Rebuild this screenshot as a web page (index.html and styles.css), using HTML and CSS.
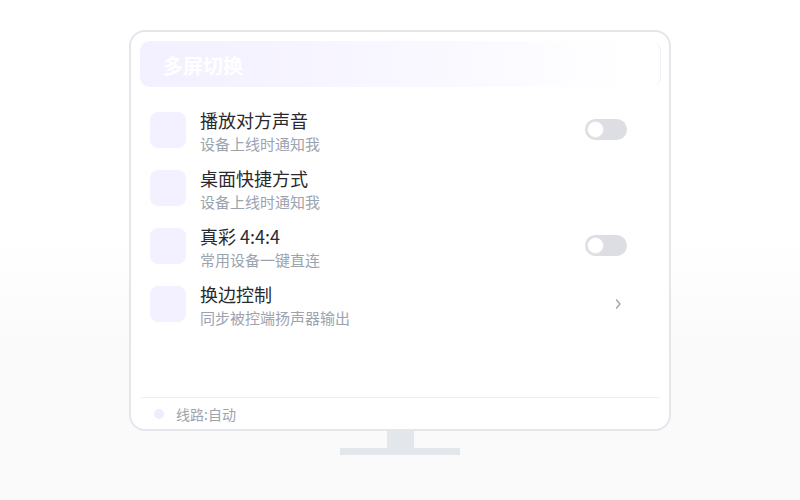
FILE: index.html
```html
<!DOCTYPE html>
<html lang="zh-CN">
<head>
  <meta charset="UTF-8" />
  <meta name="viewport" content="width=device-width, initial-scale=1.0"/>
  <title>多屏切换</title>
  <link rel="stylesheet" href="styles.css">
</head>
<body>

  <div class="screen-wrap">
    <div class="monitor">
      <div class="monitor-header">多屏切换</div>

      <div class="setting-list">
        <div class="setting-row">
          <div class="setting-icon"></div>
          <div class="setting-text">
            <div class="setting-title">播放对方声音</div>
            <div class="setting-desc">设备上线时通知我</div>
          </div>
          <div class="toggle"><span class="knob"></span></div>
        </div>

        <div class="setting-row">
          <div class="setting-icon"></div>
          <div class="setting-text">
            <div class="setting-title">桌面快捷方式</div>
            <div class="setting-desc">设备上线时通知我</div>
          </div>
        </div>

        <div class="setting-row">
          <div class="setting-icon"></div>
          <div class="setting-text">
            <div class="setting-title">真彩 4:4:4</div>
            <div class="setting-desc">常用设备一键直连</div>
          </div>
          <div class="toggle"><span class="knob"></span></div>
        </div>

        <div class="setting-row">
          <div class="setting-icon"></div>
          <div class="setting-text">
            <div class="setting-title">换边控制</div>
            <div class="setting-desc">同步被控端扬声器输出</div>
          </div>
          <div class="chevron">
            <svg width="8" height="12" viewBox="0 0 8 12"><path d="M2.5 2 L6 6 L2.5 10" fill="none" stroke="#9ca3af" stroke-width="1.3" stroke-linecap="round" stroke-linejoin="round"/></svg>
          </div>
        </div>
      </div>

      <div class="monitor-footer">
        <span class="line-dot"></span>
        <span class="line-text">线路:自动</span>
      </div>
    </div>

    <div class="stand-neck"></div>
    <div class="stand-base"></div>
  </div>

</body>
</html>
```

FILE: styles.css
```css
* {
  margin: 0;
  padding: 0;
  box-sizing: border-box;
}

body {
  font-family: "Noto Sans CJK SC", "Noto Sans", "Liberation Sans", sans-serif;
  background: linear-gradient(180deg, #ffffff 0%, #ffffff 48%, #fafafb 70%, #fafafb 100%);
  width: 800px;
  height: 500px;
  overflow: hidden;
}

.screen-wrap {
  display: flex;
  flex-direction: column;
  align-items: center;
  padding-top: 30px;
}

.monitor {
  width: 542px;
  height: 401px;
  border: 2px solid #e3e6eb;
  border-radius: 16px;
  background: #fff;
  display: flex;
  flex-direction: column;
  padding: 9px 8px 0 9px;
}

.monitor-header {
  height: 46px;
  border-radius: 10px;
  background: linear-gradient(90deg, #f3f0ff 0%, #f8f6ff 45%, #ffffff 95%);
  border-right: 1px solid #eff0f3;
  color: #fff;
  font-size: 20px;
  font-weight: 700;
  line-height: 50px;
  padding-left: 23px;
}

.setting-list {
  flex: 1;
  display: flex;
  flex-direction: column;
  gap: 22px;
  padding: 25px 34px 0 10px;
}

.setting-row {
  display: flex;
  align-items: flex-start;
  height: 36px;
}

.setting-icon {
  width: 36px;
  height: 36px;
  border-radius: 8px;
  background: #f3f0ff;
  flex-shrink: 0;
}

.setting-text {
  flex: 1;
  margin-left: 14px;
  margin-top: -5px;
}

.setting-title {
  font-size: 18px;
  line-height: 26px;
  color: #2a2a2e;
}

.setting-desc {
  font-size: 15px;
  line-height: 22px;
  color: #9ca3af;
}

.toggle {
  width: 42px;
  height: 21px;
  margin-top: 7px;
  border-radius: 11px;
  background: #dcdee3;
  position: relative;
}

.knob {
  position: absolute;
  left: 2px;
  top: 2px;
  width: 17px;
  height: 17px;
  border-radius: 50%;
  background: #fff;
  border: 1px solid #e6e8ec;
}

.chevron {
  width: 42px;
  margin-top: 12px;
  display: flex;
  justify-content: flex-end;
  padding-right: 5px;
}

.monitor-footer {
  height: 32px;
  margin: 0 1px;
  border-top: 1px solid #eef0f3;
  display: flex;
  align-items: center;
  padding-left: 13px;
}

.line-dot {
  width: 10px;
  height: 10px;
  border-radius: 50%;
  background: #efecfd;
  margin-right: 12px;
}

.line-text {
  font-size: 14px;
  color: #9ca3af;
}

.stand-neck {
  width: 27px;
  height: 17px;
  background: #e3e6ea;
}

.stand-base {
  width: 120px;
  height: 7px;
  background: #e3e6ea;
}
```
